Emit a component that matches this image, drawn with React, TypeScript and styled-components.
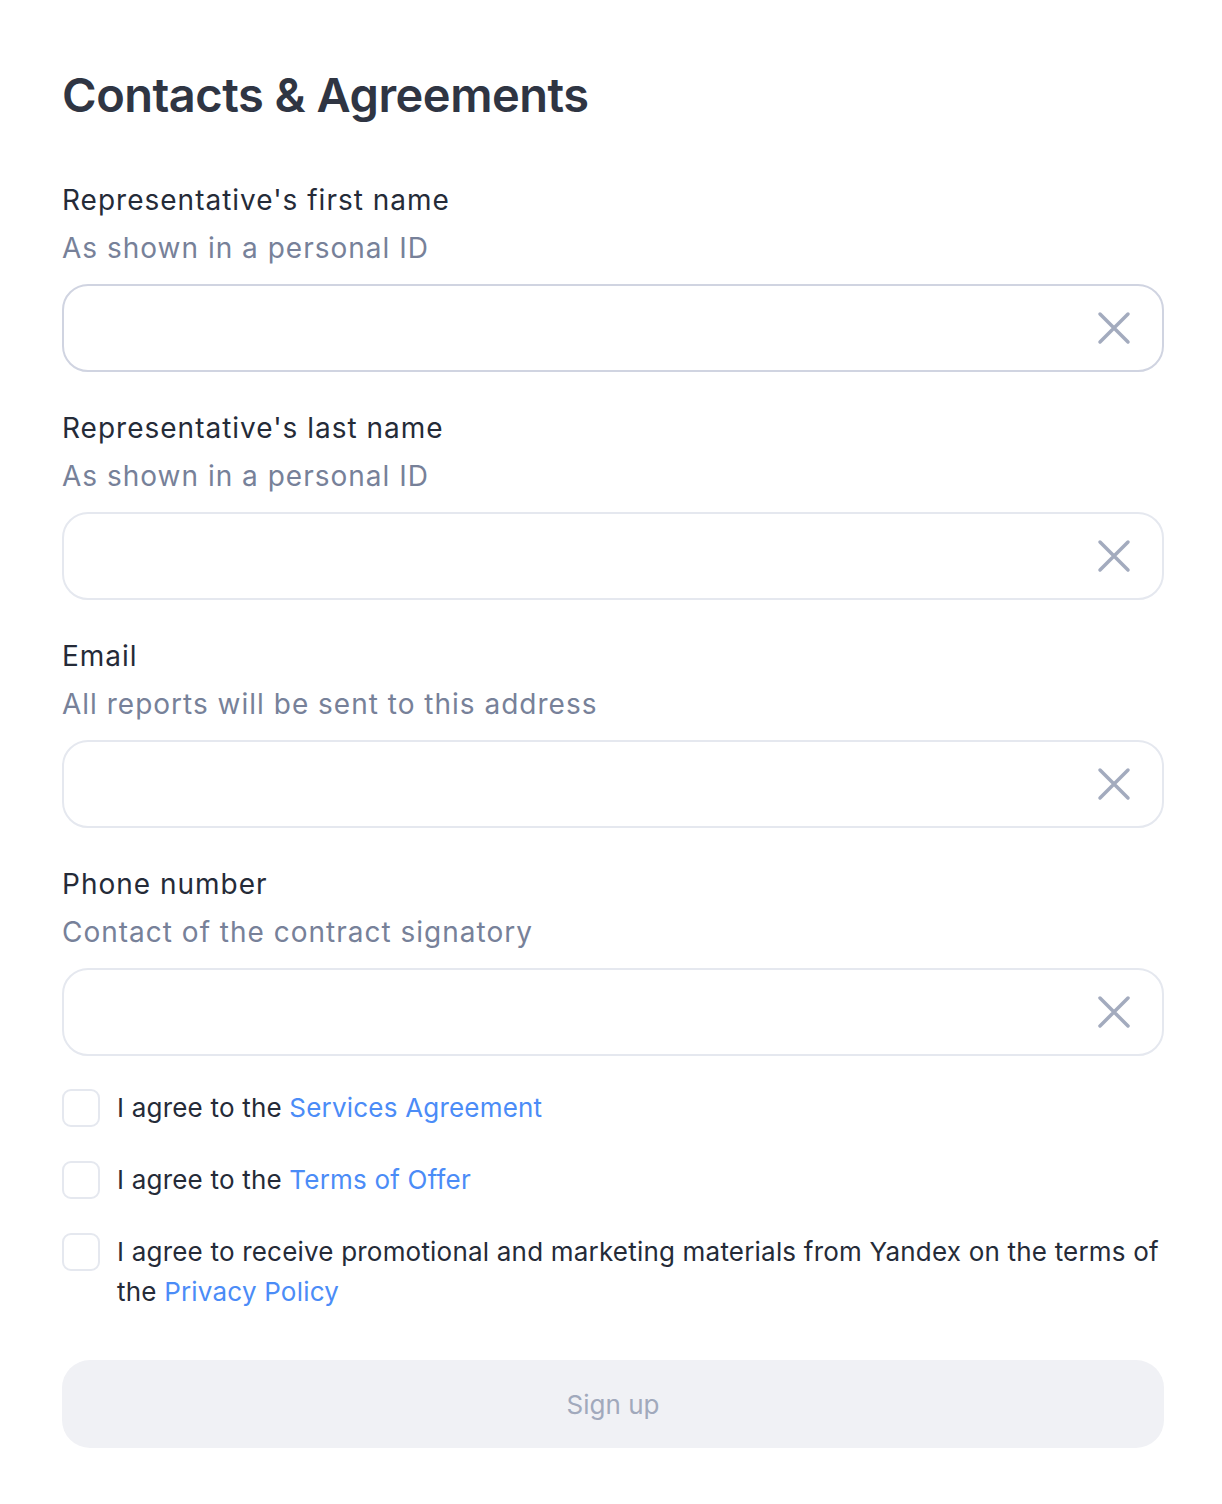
import React from 'react';
import { createGlobalStyle, styled } from 'styled-components';

const GlobalStyle = createGlobalStyle`
  * {
    box-sizing: border-box;
  }

  body {
    margin: 0;
    background: #ffffff;
    font-family: Inter, 'Noto Sans', sans-serif;
  }
`;

const Page = styled.div`
  width: 1222px;
  padding: 67px 58px 56px 62px;

  display: flex;
  flex-direction: column;
`;

const Title = styled.h1`
  margin: 0 0 53px 0;

  font-size: 47px;
  font-weight: 600;
  line-height: 56px;
  letter-spacing: -0.5px;
  color: #2f3543;
`;

const Field = styled.div`
  margin-bottom: 32px;

  display: flex;
  flex-direction: column;
`;

const Label = styled.div`
  font-size: 28px;
  line-height: 48px;
  letter-spacing: 1px;
  color: #252b38;
`;

const Hint = styled(Label)`
  color: #778199;
`;

const InputBox = styled.div<{ $active?: boolean }>`
  height: 88px;
  margin-top: 12px;
  padding: 0 31px 0 32px;

  display: flex;
  align-items: center;
  justify-content: space-between;

  border: 2px solid ${(props) => (props.$active ? '#d0d4e1' : '#e5e8ef')};
  border-radius: 26px;
  background: #ffffff;
`;

const Input = styled.input`
  flex: 1;
  height: 100%;

  border: none;
  outline: none;
  background: transparent;

  font-family: inherit;
  font-size: 27px;
  color: #252b38;
`;

const ClearButton = styled.button`
  width: 36px;
  height: 36px;
  margin-right: -1px;
  padding: 0;

  display: flex;
  align-items: center;
  justify-content: center;

  border: none;
  background: none;
  cursor: pointer;
`;

const Checks = styled.div`
  display: flex;
  flex-direction: column;
  gap: 32px;
`;

const CheckRow = styled.label`
  display: flex;
  align-items: flex-start;
  gap: 17px;

  font-size: 26px;
  line-height: 40px;
  letter-spacing: 0.2px;
  color: #252b38;
`;

const Box = styled.span`
  width: 38px;
  height: 38px;
  margin-top: 1px;
  flex-shrink: 0;

  border: 2px solid #e5e8ef;
  border-radius: 9px;
  background: #ffffff;
`;

const Link = styled.a`
  color: #4b8cf7;
  text-decoration: none;
`;

const SubmitButton = styled.button`
  height: 88px;
  margin-top: 48px;

  border: none;
  border-radius: 28px;
  background: #f0f1f5;

  font-family: inherit;
  font-size: 26px;
  color: #a1a9bc;
`;

const CrossIcon = () => (
  <svg width="34" height="34" viewBox="0 0 34 34" fill="none">
    <path d="M3 3L31 31M31 3L3 31" stroke="#a3abbe" strokeWidth="3.5" strokeLinecap="round" />
  </svg>
);

const fields = [
  { label: "Representative's first name", hint: 'As shown in a personal ID', active: true },
  { label: "Representative's last name", hint: 'As shown in a personal ID' },
  { label: 'Email', hint: 'All reports will be sent to this address' },
  { label: 'Phone number', hint: 'Contact of the contract signatory' },
];

export default function App() {
  return (
    <>
      <GlobalStyle />
      <Page>
        <Title>Contacts &amp; Agreements</Title>

        {fields.map((field) => (
          <Field key={field.label}>
            <Label>{field.label}</Label>
            <Hint>{field.hint}</Hint>
            <InputBox $active={field.active}>
              <Input />
              <ClearButton type="button">
                <CrossIcon />
              </ClearButton>
            </InputBox>
          </Field>
        ))}

        <Checks>
          <CheckRow>
            <Box />
            <span>
              I agree to the <Link href="#">Services Agreement</Link>
            </span>
          </CheckRow>
          <CheckRow>
            <Box />
            <span>
              I agree to the <Link href="#">Terms of Offer</Link>
            </span>
          </CheckRow>
          <CheckRow>
            <Box />
            <span>
              I agree to receive promotional and marketing materials from Yandex on the terms of
              the <Link href="#">Privacy Policy</Link>
            </span>
          </CheckRow>
        </Checks>

        <SubmitButton type="button">Sign up</SubmitButton>
      </Page>
    </>
  );
}
